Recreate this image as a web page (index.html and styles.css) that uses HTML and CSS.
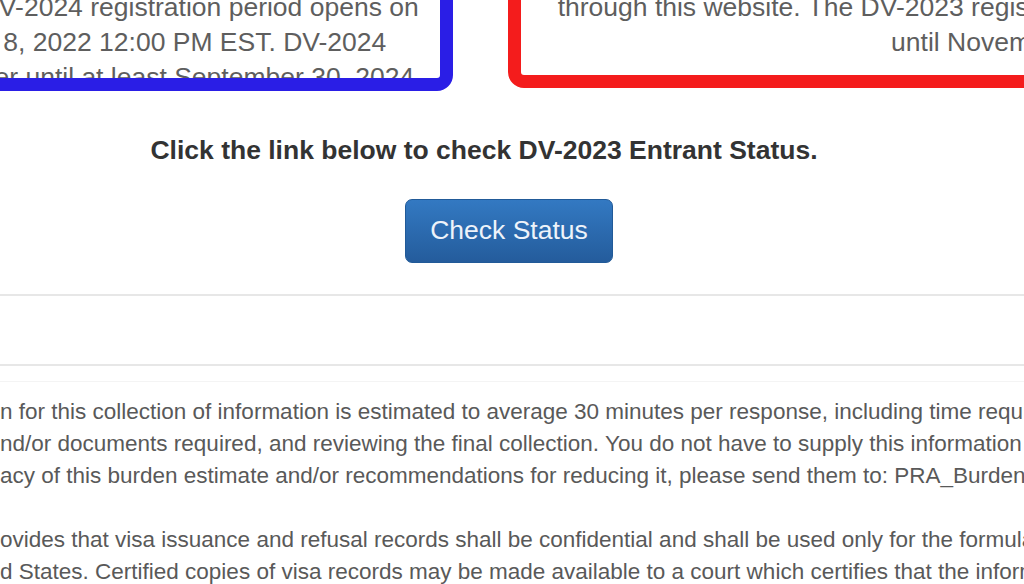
FILE: index.html
```html
<!DOCTYPE html>
<html>
<head>
    <title>Electronic Diversity Visa Program</title>
    <link rel="stylesheet" href="styles.css">
</head>
<body>
    <div class="page">
        <div class="notices">
            <div class="notice notice-dv24">
                The next DV-2024 registration period opens on<br>
                October 8, 2022 12:00 PM EST. DV-2024<br>
                is open later until at least September 30, 2024
            </div>
            <div class="notice notice-dv23">
                through this website. The DV-2023 registration period remains open for entries<br>
                until November 2022.
            </div>
            <!-- highlight marks drawn over the two notices -->
            <span class="mark mark-blue"></span>
            <span class="mark mark-red"></span>
        </div>

        <p class="lead">Click the link below to check DV-2023 Entrant Status.</p>
        <div class="actions">
            <a class="btn-status" href="#">Check Status</a>
        </div>

        <div class="divider"></div>
        <div class="divider"></div>
        <div class="divider divider-faint"></div>

        <div class="footer">
            <p>
                n for this collection of information is estimated to average 30 minutes per response, including time required for searching existing data sources<br>
                nd/or documents required, and reviewing the final collection. You do not have to supply this information unless this collection displays a valid OMB number<br>
                acy of this burden estimate and/or recommendations for reducing it, please send them to: PRA_BurdenComments@state.gov
            </p>
            <p>
                ovides that visa issuance and refusal records shall be confidential and shall be used only for the formulation, amendment, administration<br>
                d States. Certified copies of visa records may be made available to a court which certifies that the information contained in such records is needed
            </p>
        </div>
    </div>
</body>
</html>
```

FILE: styles.css
```css
body {
    margin: 0;
    font-family: "Liberation Sans", Arial, sans-serif;
    background-color: white;
}
.page {
    width: 1024px;
    height: 584px;
    overflow: hidden;
}
.notices {
    position: relative;
    display: flex;
    gap: 93px;
    margin-left: -156px;
    margin-top: -10px;
}
.notice {
    flex: none;
    font-size: 26.5px;
    line-height: 35px;
    color: #5e5e5e;
    text-align: center;
    white-space: nowrap;
}
.notice-dv24 {
    width: 600px;
}
.notice-dv23 {
    width: 960px;
}
.mark {
    position: absolute;
    top: -30px;
    border: 13px solid;
    border-radius: 16px;
    box-sizing: border-box;
}
.mark-blue {
    left: 0;
    width: 609px;
    height: 131px;
    border-color: #2a1ee6;
}
.mark-red {
    left: 664px;
    width: 700px;
    height: 128px;
    border-color: #f41c1c;
}
.lead {
    margin: 37px 0 0;
    padding-right: 56px;
    font-size: 26.5px;
    line-height: 36px;
    font-weight: bold;
    color: #333;
    text-align: center;
    white-space: nowrap;
}
.actions {
    display: flex;
    justify-content: center;
    padding-right: 6px;
    margin-top: 31px;
}
.btn-status {
    display: block;
    width: 208px;
    height: 64px;
    box-sizing: border-box;
    border: 1px solid #215a98;
    border-radius: 7px;
    background: linear-gradient(#3379c2, #245c9c);
    color: #eef3fa;
    font-size: 26.5px;
    line-height: 60px;
    text-align: center;
    text-decoration: none;
}
.divider {
    height: 2px;
    margin-top: 31px;
    background-color: #e7e7e7;
}
.divider + .divider {
    margin-top: 68px;
}
.divider-faint {
    height: 1px;
    background-color: #f4f4f4;
}
.divider + .divider.divider-faint {
    margin-top: 15px;
}
.footer {
    margin-top: 14px;
    font-size: 22.5px;
    line-height: 32px;
    color: #595959;
    white-space: nowrap;
}
.footer p {
    margin: 0;
}
.footer p + p {
    margin-top: 32px;
}
```
